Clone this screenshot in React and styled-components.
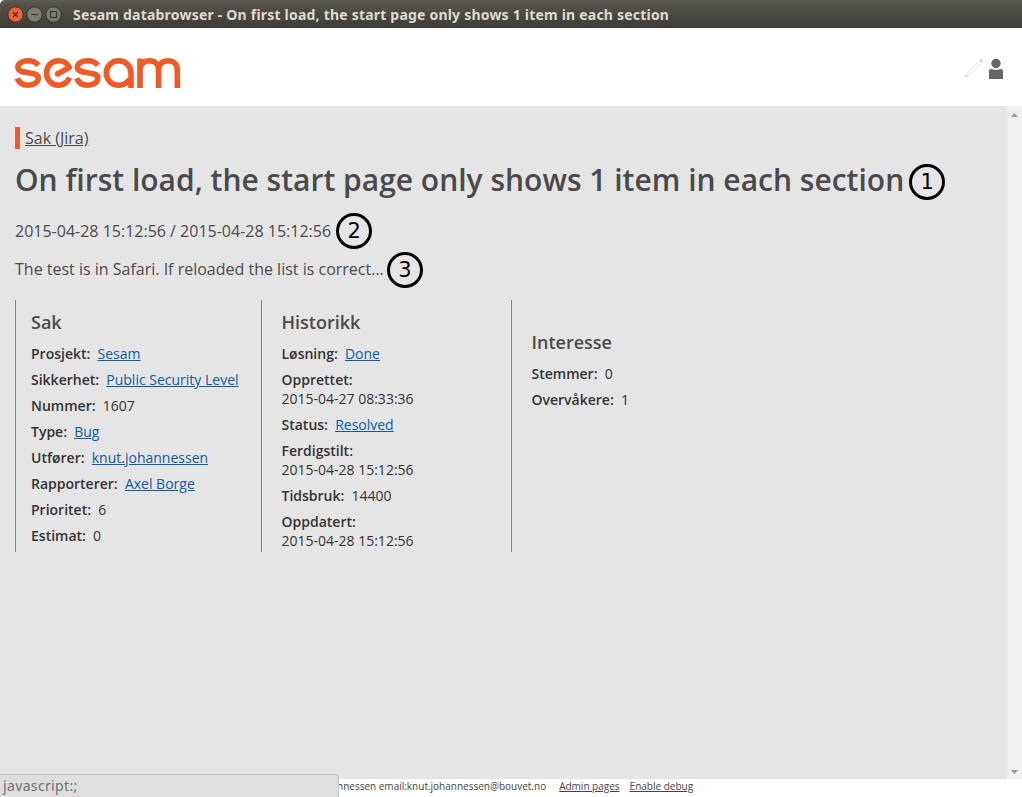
import React from "react";
import styled, { createGlobalStyle } from "styled-components";

const Global = createGlobalStyle`
  *, *::before, *::after { box-sizing: border-box; }
  html, body { margin: 0; padding: 0; }
  body { font-family: "Open Sans", "Noto Sans", sans-serif; color: #4a4a4a; overflow: hidden; }
  h1, h2, p, dl, dd, dt { margin: 0; font-weight: normal; }
`;

const Window = styled.div`
  position: relative;
  width: 1022px;
  height: 797px;
  display: flex;
  flex-direction: column;
  background: #fff;
  overflow: hidden;
`;

const TitleBar = styled.div`
  height: 28px;
  flex: none;
  display: flex;
  align-items: center;
  padding: 2px 0 0 7px;
  border-radius: 5px 0 0 0;
  background: linear-gradient(#5b5a52 0, #5b5a52 2px, #55534b 3px, #3d3c37 28px);
`;

const WindowButtons = styled.svg`
  display: block;
  flex: none;
`;

const Title = styled.div`
  margin-left: 11px;
  font: 700 14px/20px "Noto Sans", sans-serif;
  letter-spacing: 0.208px;
  color: #dfdbd2;
  white-space: nowrap;
`;

const Header = styled.header`
  height: 78px;
  flex: none;
  display: flex;
  justify-content: space-between;
  padding: 26px 18px 0 12px;
`;

const HeaderIcons = styled.div`
  display: flex;
  gap: 4px;
  padding-top: 4px;
`;

const Body = styled.div`
  height: 673px;
  flex: none;
  display: flex;
  background: #e5e5e5;
`;

const Content = styled.main`
  flex: 1;
  padding: 21px 0 0 15px;
`;

const Scrollbar = styled.div`
  width: 15px;
  display: flex;
  flex-direction: column;
  justify-content: space-between;
  align-items: center;
  padding: 7px 0 5px;
  background: #f0f0f0;
`;

const TypeLink = styled.div`
  height: 22px;
  border-left: 5px solid #f05a30;
  padding-left: 5px;
  font-size: 16px;
  line-height: 22px;
`;

const PlainLink = styled.a`
  color: inherit;
  text-decoration: underline;
`;

const Line = styled.div`
  display: flex;
  align-items: center;
  height: ${(p) => p.$height}px;
  margin-top: ${(p) => p.$top}px;
  gap: ${(p) => p.$gap}px;
  white-space: nowrap;
`;

const Heading = styled.h1`
  padding-bottom: 4px;
  font-size: 30px;
  line-height: 40px;
  font-weight: 600;
`;

const Lead = styled.p`
  padding-bottom: ${(p) => p.$lift || 0}px;
  font-size: 16px;
  line-height: 22px;
`;

const Marker = styled.span`
  width: 36px;
  height: 36px;
  flex: none;
  border: 3px solid #000;
  border-radius: 50%;
  color: #000;
  font: 21px/31px "DejaVu Sans", sans-serif;
  text-align: center;
`;

const Columns = styled.div`
  display: flex;
  height: 252px;
  margin-top: 12px;
`;

const Column = styled.section`
  width: ${(p) => p.$width}px;
  border-left: 1px solid #808080;
  padding: ${(p) => p.$top}px 0 0 ${(p) => p.$left}px;
`;

const ColumnTitle = styled.h2`
  font-size: 18px;
  line-height: 24px;
  font-weight: 600;
  margin-bottom: 10px;
`;

const Fields = styled.dl`
  display: flex;
  flex-direction: column;
  gap: 7px;
  font-size: 14px;
  line-height: 19px;
  color: #333;
  white-space: nowrap;
`;

const Field = styled.div`
  display: flex;
  flex-direction: ${(p) => (p.$stacked ? "column" : "row")};
  column-gap: 7.2px;
`;

const Label = styled.dt`
  && { font-weight: 600; }
`;

const ValueLink = styled.a`
  color: #0b5c9e;
  text-decoration: underline;
`;

const Footer = styled.footer`
  flex: 1;
  display: flex;
  padding-left: 337px;
  font-size: 10px;
  line-height: 14px;
  color: #444;
  white-space: nowrap;
`;

const FooterLink = styled(PlainLink)`
  margin-left: ${(p) => p.$gap}px;
`;

const Status = styled.div`
  position: absolute;
  left: -1px;
  bottom: 0;
  width: 340px;
  height: 23px;
  border: 1px solid #c4c4c4;
  border-bottom: 0;
  border-radius: 0 4px 0 0;
  background: #dedede;
  padding-left: 3px;
  font: 14px/22px "Noto Sans", sans-serif;
  letter-spacing: 0.35px;
  color: #707070;
`;

function Logo() {
  const s =
    "M38.4 65.4C36 62.2 32.8 60.8 28.4 60.8C22 60.8 17.9 63.7 17.9 67.3C17.9 71.2 22 71.8 28.3 72.7C34.8 73.6 38.3 74.5 38.3 78.2C38.3 82.3 34 85.2 28.3 85.2C22.7 85.2 18.8 82.5 17.3 78.3";
  return (
    <svg width="172" height="38" viewBox="12 54 172 38" fill="none" stroke="#f15a24" strokeWidth="5.6">
      <path d={s} />
      <path d="M57 74.2L69.3 67.6C67.2 63.4 63.2 60.8 58.4 60.8C51.7 60.8 46.6 66 46.6 73C46.6 80 51.7 85.2 58.4 85.2C63.6 85.2 67.4 82.5 69.6 77.6" strokeLinejoin="round" />
      <circle cx="57.6" cy="73.9" r="2.7" fill="#f15a24" stroke="none" />
      <path d={s} transform="translate(59.5 0)" />
      <path d="M131 88V73C131 65.8 125.6 60.8 118.6 60.8C111.6 60.8 106.4 66 106.4 73C106.4 80 111.6 85.2 118.6 85.2C123.6 85.2 127.4 82.8 129.5 79" />
      <path d="M140 88V58.5M140 70C140 64 143.8 60.8 149.2 60.8C154.7 60.8 158.6 64.3 158.6 70V88M158.6 70C158.6 64.3 162.4 60.8 168 60.8C173.5 60.8 177.3 64.3 177.3 70V88" />
    </svg>
  );
}

function Buttons() {
  return (
    <WindowButtons width="55" height="18" viewBox="0 0 55 18">
      <g stroke="#34332e">
        <circle cx="8.5" cy="8.5" r="7.7" fill="#ee6238" />
        <circle cx="27.5" cy="8.5" r="7.7" fill="#7d7b73" />
        <circle cx="46.5" cy="8.5" r="7.7" fill="#7d7b73" />
      </g>
      <g fill="none" stroke="#393732" strokeWidth="1.2">
        <path d="M6 6l5 5M11 6l-5 5M24 8.5h7" />
        <rect x="43.5" y="5.5" width="6" height="6" />
      </g>
    </WindowButtons>
  );
}

function Pencil() {
  return (
    <svg width="20" height="20" viewBox="0 0 20 20" fill="none" stroke="#dcdcdc" strokeWidth="0.9">
      <path d="M1.2 18.8L2.5 15.8L15.6 2.6L17.6 4.8L4.6 17.6Z" />
      <path d="M15.6 2.4Q17.2 .8 18.4 1.8Q19.4 3 17.8 4.6Z" fill="#dcdcdc" />
      <path d="M1 19L2 16.8L3.3 18Z" fill="#d2d2d2" />
    </svg>
  );
}

function Person() {
  return (
    <svg width="16" height="22" viewBox="0 0 16 22" fill="#666">
      <circle cx="8" cy="5.5" r="4.7" />
      <path d="M1 21V13Q1 11 3 11H4Q8 13 12 11H13Q15 11 15 13V21Z" />
    </svg>
  );
}

const Arrow = ({ d }) => (
  <svg width="7" height="4" viewBox="0 0 8 4" preserveAspectRatio="none" fill="#999">
    <path d={d} />
  </svg>
);

const sections = [
  {
    title: "Sak", width: 246, left: 15, top: 10,
    fields: [
      { label: "Prosjekt:", value: "Sesam", link: true },
      { label: "Sikkerhet:", value: "Public Security Level", link: true },
      { label: "Nummer:", value: "1607" },
      { label: "Type:", value: "Bug", link: true },
      { label: "Utfører:", value: "knut.johannessen", link: true },
      { label: "Rapporterer:", value: "Axel Borge", link: true },
      { label: "Prioritet:", value: "6" },
      { label: "Estimat:", value: "0" },
    ],
  },
  {
    title: "Historikk", width: 250, left: 19.5, top: 10,
    fields: [
      { label: "Løsning:", value: "Done", link: true },
      { label: "Opprettet:", value: "2015-04-27 08:33:36", stacked: true },
      { label: "Status:", value: "Resolved", link: true },
      { label: "Ferdigstilt:", value: "2015-04-28 15:12:56", stacked: true },
      { label: "Tidsbruk:", value: "14400" },
      { label: "Oppdatert:", value: "2015-04-28 15:12:56", stacked: true },
    ],
  },
  {
    title: "Interesse", width: 250, left: 19.5, top: 30,
    fields: [
      { label: "Stemmer:", value: "0" },
      { label: "Overvåkere:", value: "1" },
    ],
  },
];

export default function App() {
  return (
    <Window>
      <Global />
      <TitleBar>
        <Buttons />
        <Title>Sesam databrowser - On first load, the start page only shows 1 item in each section</Title>
      </TitleBar>
      <Header>
        <Logo />
        <HeaderIcons>
          <Pencil />
          <Person />
        </HeaderIcons>
      </Header>
      <Body>
        <Content>
          <TypeLink>
            <PlainLink>Sak (Jira)</PlainLink>
          </TypeLink>
          <Line $height={40} $top={13} $gap={5}>
            <Heading>On first load, the start page only shows 1 item in each section</Heading>
            <Marker>1</Marker>
          </Line>
          <Line $height={36} $top={11} $gap={5}>
            <Lead>2015-04-28 15:12:56 / 2015-04-28 15:12:56</Lead>
            <Marker>2</Marker>
          </Line>
          <Line $height={36} $top={3} $gap={3}>
            <Lead $lift={2}>The test is in Safari. If reloaded the list is correct...</Lead>
            <Marker>3</Marker>
          </Line>
          <Columns>
            {sections.map((s) => (
              <Column key={s.title} $width={s.width} $left={s.left} $top={s.top}>
                <ColumnTitle>{s.title}</ColumnTitle>
                <Fields>
                  {s.fields.map((f) => (
                    <Field key={f.label} $stacked={f.stacked}>
                      <Label>{f.label}</Label>
                      <dd>{f.link ? <ValueLink>{f.value}</ValueLink> : f.value}</dd>
                    </Field>
                  ))}
                </Fields>
              </Column>
            ))}
          </Columns>
        </Content>
        <Scrollbar>
          <Arrow d="M0 4L4 0L8 4Z" />
          <Arrow d="M0 0H8L4 4Z" />
        </Scrollbar>
      </Body>
      <Footer>
        <span>nnessen email:knut.johannessen@bouvet.no</span>
        <FooterLink $gap={13}>Admin pages</FooterLink>
        <FooterLink $gap={10}>Enable debug</FooterLink>
      </Footer>
      <Status>javascript:;</Status>
    </Window>
  );
}
